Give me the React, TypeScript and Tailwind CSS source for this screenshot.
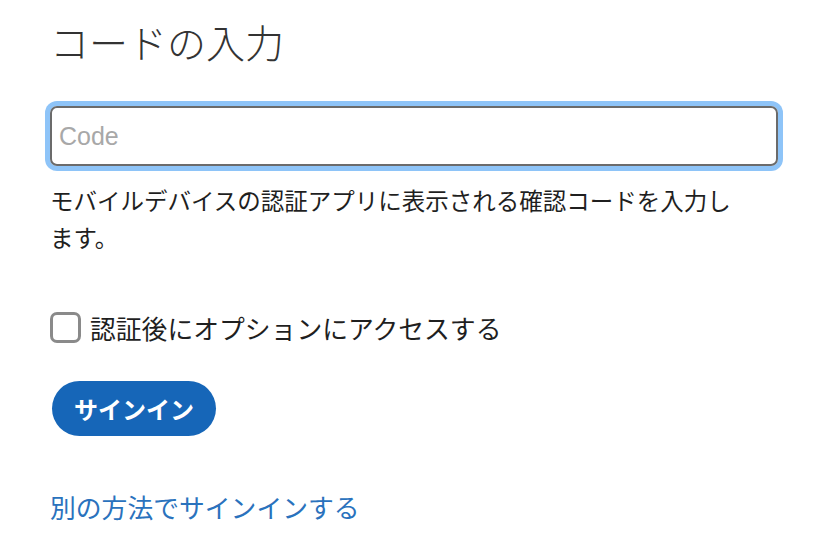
import { useState } from "react";

const jp = { fontFamily: '"Noto Sans CJK JP", "Noto Sans", sans-serif' };

export default function App() {
  const [code, setCode] = useState("");
  const [checked, setChecked] = useState(false);

  return (
    <div className="min-h-screen bg-white px-[50px] pt-[17px]" style={jp}>
      <h1 className="text-[39px] leading-[48px] font-light text-[#333333]">コードの入力</h1>

      <input
        value={code}
        onChange={(e) => setCode(e.target.value)}
        placeholder="Code"
        className="mt-[41px] block w-[728px] h-[60px] rounded-[7px] border-2 border-[#6b6b6b] ring-[5px] ring-[#8ec4f8] px-[7px] text-[25px] text-[#222] outline-none placeholder:text-[#a8a8a8] font-['Liberation_Sans',sans-serif]"
      />

      <p className="mt-[16px] max-w-[700px] text-[23.5px] leading-[37px] text-[#1f1f1f]">
        モバイルデバイスの認証アプリに表示される確認コードを入力します。
      </p>

      <label className="mt-[56px] flex items-center gap-[9px] cursor-pointer">
        <input
          type="checkbox"
          checked={checked}
          onChange={(e) => setChecked(e.target.checked)}
          className="peer sr-only"
        />
        <span className="h-[31px] w-[31px] rounded-[7px] border-[3px] border-[#8a8a8a] bg-white" />
        <span className="text-[25.8px] leading-[31px] text-[#1f1f1f]">
          認証後にオプションにアクセスする
        </span>
      </label>

      <button className="ml-[2px] mt-[38px] flex h-[55px] w-[164px] items-center justify-center rounded-full bg-[#1666b8] text-[24px] font-bold text-white">
        サインイン
      </button>

      <a href="#" className="mt-[55px] block text-[25.8px] leading-[32px] text-[#2a72bd]">
        別の方法でサインインする
      </a>
    </div>
  );
}
